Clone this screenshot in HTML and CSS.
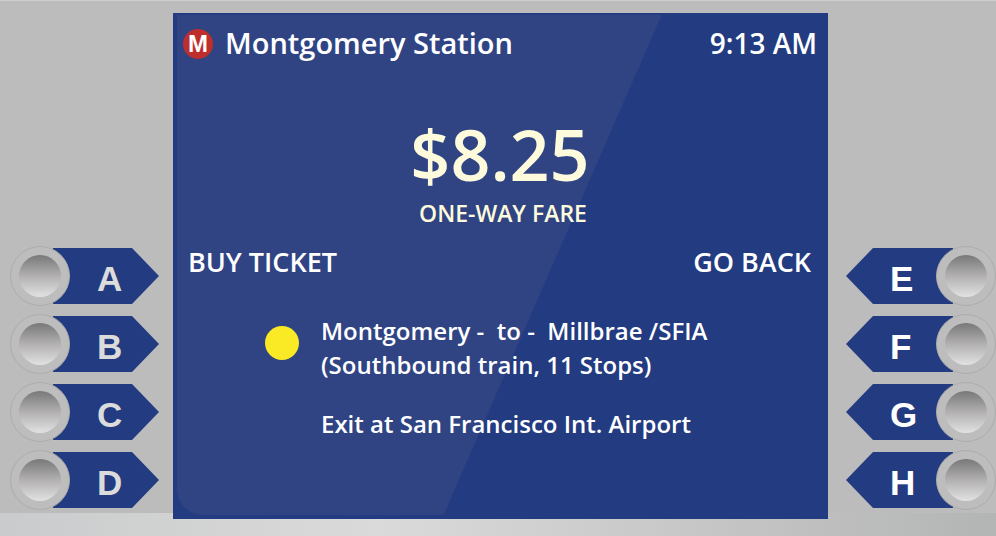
FILE: index.html
```html
<!DOCTYPE html>
<html lang="en">
<head>
    <meta charset="UTF-8">
    <meta name="viewport" content="width=device-width, initial-scale=1.0">
    <title>Ticket Machine</title>
    <link rel="stylesheet" href="styles.css">
</head>
<body>
    <div class="machine">
        <div class="keys keys-left">
            <button class="key" type="button"><span class="knob"></span><span class="tag">A</span></button>
            <button class="key" type="button"><span class="knob"></span><span class="tag">B</span></button>
            <button class="key" type="button"><span class="knob"></span><span class="tag">C</span></button>
            <button class="key" type="button"><span class="knob"></span><span class="tag">D</span></button>
        </div>

        <main class="screen">
            <header class="topbar">
                <span class="logo">M</span>
                <h1>Montgomery Station</h1>
                <time>9:13 AM</time>
            </header>

            <section class="fare">
                <p class="price">$8.25</p>
                <p class="fare-type">ONE-WAY FARE</p>
            </section>

            <div class="options">
                <span>BUY TICKET</span>
                <span>GO BACK</span>
            </div>

            <section class="route">
                <span class="line-dot"></span>
                <div>
                    <p>Montgomery -&nbsp; to -&nbsp; Millbrae /SFIA<br>(Southbound train, 11 Stops)</p>
                    <p>Exit at San Francisco Int. Airport</p>
                </div>
            </section>
        </main>

        <div class="keys keys-right">
            <button class="key" type="button"><span class="knob"></span><span class="tag">E</span></button>
            <button class="key" type="button"><span class="knob"></span><span class="tag">F</span></button>
            <button class="key" type="button"><span class="knob"></span><span class="tag">G</span></button>
            <button class="key" type="button"><span class="knob"></span><span class="tag">H</span></button>
        </div>
    </div>
</body>
</html>
```
FILE: styles.css
```css
* {
    box-sizing: border-box;
}

body {
    margin: 0;
    min-height: 100vh;
    display: flex;
    font-family: "Open Sans", "Noto Sans", sans-serif;
    font-weight: 600;
    color: #fff;
    /* lighter shelf under the metal face plate */
    background:
        linear-gradient(#cecece, #cecece) top / 100% 1px no-repeat,
        linear-gradient(90deg, #cacbcc, #dadada 38%, #bfbfbf 82%, #b3b5b5) bottom / 100% 23px no-repeat,
        #bcbcbc;
}

h1,
p {
    margin: 0;
    font-weight: 600;
}

.machine {
    flex: 1;
    display: grid;
    grid-template-columns: 173fr 655fr 168fr;
    padding: 13px 0 17px;
}

/* Side keys */
.keys {
    display: flex;
    flex-direction: column;
    justify-content: flex-end;
    gap: 8px;
    padding: 0 14px 9px 10px;
}

.keys-right {
    padding: 0 0 9px 18px;
}

.key {
    display: flex;
    align-items: center;
    padding: 0;
    border: none;
    background: none;
    color: #dcdcdc;
    cursor: pointer;
}

.knob {
    position: relative;
    z-index: 1;
    flex: none;
    width: 60px;
    height: 60px;
    padding: 8px;
    border: 1px solid #acacac;
    border-radius: 50%;
    background: #bdbdbd;
}

.knob::before {
    content: "";
    display: block;
    height: 100%;
    border-radius: 50%;
    background: linear-gradient(#787878, #b2b0b0 50%, #e2e2e2);
}

.tag {
    flex: 1;
    height: 56px;
    margin-left: -17px;
    padding: 3px 0 0 44px;
    background: #233b80;
    clip-path: polygon(0 0, calc(100% - 27px) 0, 100% 50%, calc(100% - 27px) 100%, 0 100%);
    font: bold 35px/56px "Liberation Sans", Arial, sans-serif;
    text-align: left;
}

.keys-right .key {
    flex-direction: row-reverse;
    color: #fff;
}

.keys-right .tag {
    margin: 0 -17px 0 0;
    clip-path: polygon(0 50%, 27px 0, 100% 0, 100% 100%, 27px 100%);
}

/* Screen */
.screen {
    position: relative;
    padding: 12px 11px 76px 10px;
    background: #233b80;
}

/* glare */
.screen::before {
    content: "";
    position: absolute;
    top: 2px;
    bottom: 4px;
    left: 4px;
    width: 74%;
    border-radius: 0 0 0 26px;
    background: #304484;
    clip-path: polygon(0 0, 100% 0, 55% 100%, 0 100%);
}

.screen > * {
    position: relative;
}

.topbar {
    display: flex;
    align-items: center;
    gap: 12px;
    font-size: 28px;
    line-height: 36px;
}

.topbar h1 {
    font-size: 29px;
}

.topbar time {
    margin-left: auto;
}

.logo {
    width: 30px;
    height: 30px;
    margin-top: 2px;
    border-radius: 50%;
    background: #bd2e2c;
    font: bold 24px/30px "Liberation Sans", Arial, sans-serif;
    text-align: center;
}

.fare {
    margin-top: 57px;
    text-align: center;
    color: #fdfbdc;
}

.price {
    font-size: 70px;
    line-height: 72px;
}

.fare-type {
    margin-top: 7px;
    padding-left: 6px;
    font-size: 23px;
    line-height: 32px;
}

.options {
    display: flex;
    justify-content: space-between;
    margin-top: 16px;
    padding: 0 6px 0 5px;
    font-size: 27px;
    line-height: 34px;
}

.route {
    display: flex;
    gap: 22px;
    margin: 35px 0 0 82px;
    font-size: 24px;
    line-height: 34px;
}

.route p + p {
    margin-top: 25px;
}

.line-dot {
    width: 34px;
    height: 34px;
    margin-top: 12px;
    border-radius: 50%;
    background: #fae925;
}
```
